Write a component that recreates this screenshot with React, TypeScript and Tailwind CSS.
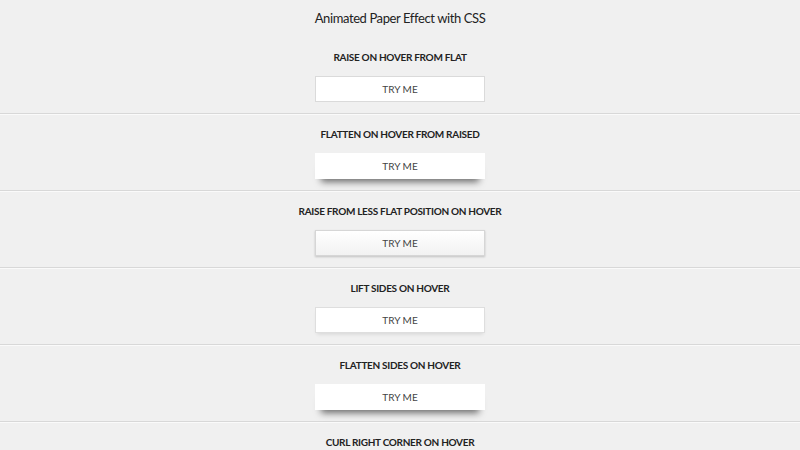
import React from "react";

const sections = [
  { title: "RAISE ON HOVER FROM FLAT", btn: "bg-white border border-[#dadada]" },
  { title: "FLATTEN ON HOVER FROM RAISED", btn: "bg-white shadow-[0_9px_7px_-6px_rgba(0,0,0,0.55)]" },
  { title: "RAISE FROM LESS FLAT POSITION ON HOVER", btn: "bg-gradient-to-b from-white to-[#f2f2f2] border border-[#d6d6d6] shadow-[0_1px_2px_rgba(0,0,0,0.2)]" },
  { title: "LIFT SIDES ON HOVER", btn: "bg-white border border-[#dedede] shadow-[0_3px_4px_-2px_rgba(0,0,0,0.12)]" },
  { title: "FLATTEN SIDES ON HOVER", btn: "bg-white shadow-[0_9px_7px_-6px_rgba(0,0,0,0.55)]" },
  { title: "CURL RIGHT CORNER ON HOVER", btn: "bg-white border border-[#dadada]" },
];

export default function App() {
  return (
    <div className="w-[800px] h-[450px] overflow-hidden bg-[#f0f0f0] font-['Lato','Noto_Sans',sans-serif]">
      <div className="h-[38px] flex items-center justify-center text-[13px] tracking-[-0.4px] text-[#222]">
        Animated Paper Effect with CSS
      </div>
      {sections.map((s, i) => (
        <div key={i} className="pt-[12px] flex flex-col items-center border-b border-[#d8d8d8] shadow-[0_1px_0_#fafafa] mb-px">
          <div className="h-[14px] leading-[14px] text-[10px] font-bold tracking-[-0.3px] text-[#222]">{s.title}</div>
          <div className={`mt-[12px] mb-[11px] w-[170px] h-[26px] flex items-center justify-center text-[10px] text-[#444] ${s.btn}`}>
            TRY ME
          </div>
        </div>
      ))}
    </div>
  );
}
